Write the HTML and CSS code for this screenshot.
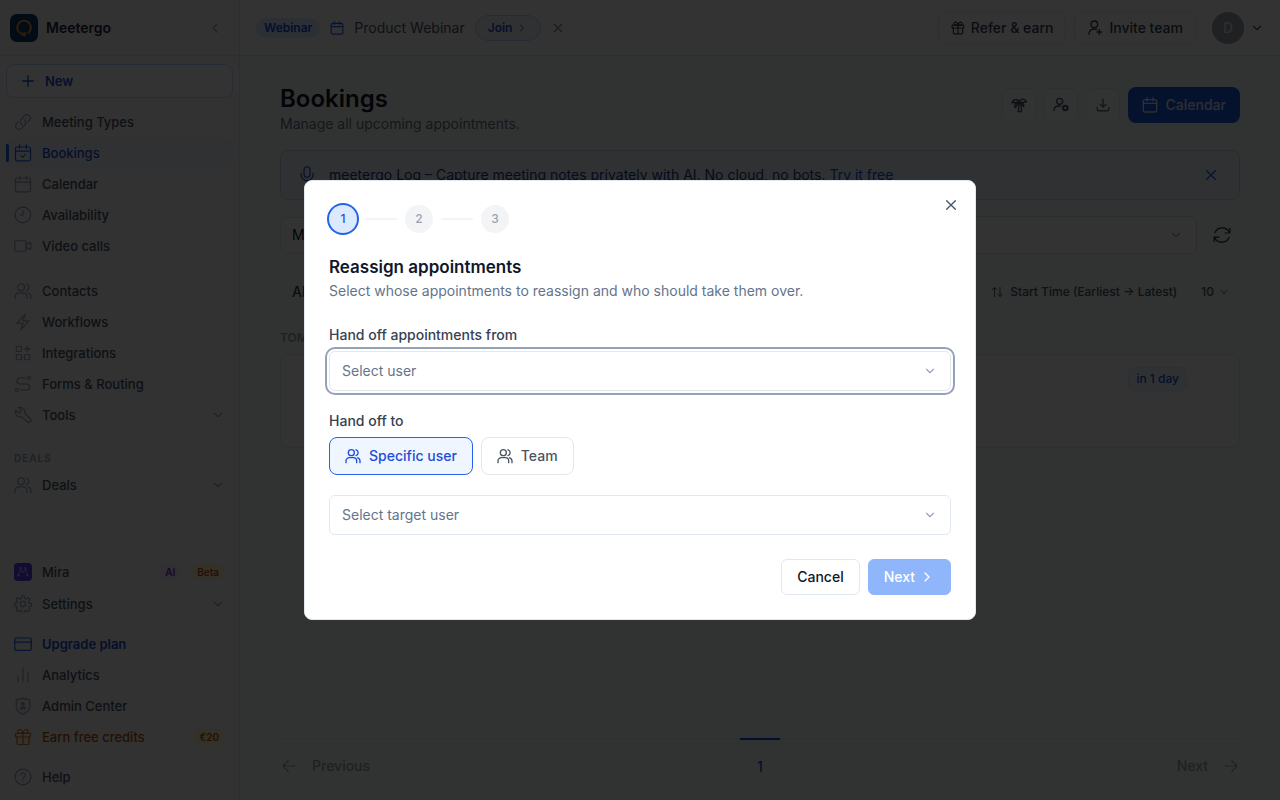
FILE: index.html
```html
<!DOCTYPE html>
<html lang="en">
<head>
<meta charset="utf-8">
<meta name="viewport" content="width=device-width, initial-scale=1">
<title>Bookings – Meetergo</title>
<link rel="stylesheet" href="styles.css">
</head>
<body>
<svg class="sprite" aria-hidden="true">
  <symbol id="chev-d" viewBox="0 0 24 24"><path d="m6 9 6 6 6-6"/></symbol>
  <symbol id="chev-l" viewBox="0 0 24 24"><path d="m15 18-6-6 6-6"/></symbol>
  <symbol id="chev-r" viewBox="0 0 24 24"><path d="m9 18 6-6-6-6"/></symbol>
  <symbol id="x" viewBox="0 0 24 24"><path d="M18.500 5.500 5.500 18.500M5.500 5.500l13 13"/></symbol>
  <symbol id="plus" viewBox="0 0 24 24"><path d="M12 4v16M4 12h16"/></symbol>
  <symbol id="link" viewBox="0 0 24 24"><path d="M13.2 8.7a4.5 4.5 0 0 1 1.2 7.2l-4.5 4.5a4.5 4.5 0 0 1-6.4-6.4l1.8-1.7m13.3-.6 1.8-1.7a4.5 4.5 0 0 0-6.4-6.4L9.600 8.100a4.500 4.500 0 0 0 1.200 7.200"/></symbol>
  <symbol id="cal" viewBox="0 0 24 24"><rect x="2" y="4" width="20" height="18.500" rx="2.500"/><path d="M2 9.500h20M7.500 1v5M16.500 1v5"/></symbol>
  <symbol id="cal-check" viewBox="0 0 24 24"><rect x="2" y="4" width="20" height="18.500" rx="2.500"/><path d="M2 9.500h20M7.500 1v5M16.500 1v5M9 15.500l2.300 2.300 4-4"/></symbol>
  <symbol id="clock" viewBox="0 0 24 24"><circle cx="12" cy="12" r="10.500"/><path d="M12 6v6H7.500"/></symbol>
  <symbol id="video" viewBox="0 0 24 24"><rect x="1" y="5" width="15" height="14" rx="2"/><path d="m16 10.500 5-3a1 1 0 0 1 1.500.800v7.400a1 1 0 0 1-1.500.800l-5-3"/></symbol>
  <symbol id="users" viewBox="0 0 24 24"><circle cx="9.500" cy="7" r="4.500"/><path d="M1.500 22v-2.500a5 5 0 0 1 5-5h6a5 5 0 0 1 5 5V22M16.500 2.700a4.500 4.500 0 0 1 0 8.600M22.500 22v-2.500a5 5 0 0 0-3.500-4.800"/></symbol>
  <symbol id="bolt" viewBox="0 0 24 24"><path d="m4 13.500 11-12-3 9h8L9 22.500l3-9z"/></symbol>
  <symbol id="grid-plus" viewBox="0 0 24 24"><rect x="3" y="3" width="7" height="7" rx="1.500"/><rect x="3" y="14" width="7" height="7" rx="1.500"/><rect x="14" y="14" width="7" height="7" rx="1.500"/><path d="M17.500 3v7M14 6.500h7"/></symbol>
  <symbol id="route" viewBox="0 0 24 24"><circle cx="4" cy="20" r="2"/><circle cx="20" cy="4" r="2"/><path d="M15 4H8a4 4 0 0 0 0 8h9a4 4 0 0 1 0 8H9"/></symbol>
  <symbol id="wrench" viewBox="0 0 24 24"><path d="M9.600 14.200a6.500 6.500 0 0 1-7.400-8.600l3.900 3.700 3-.7.700-3-3.700-3.400a6.500 6.500 0 0 1 8.400 7.600l7.300 7.200a2.800 2.800 0 0 1-4 4z"/></symbol>
  <symbol id="gear" viewBox="0 0 24 24"><circle cx="12" cy="12" r="3.500"/><path d="M10.300 1.500h3.400l.6 3 2 .8 2.600-1.700 2.400 2.400L19.600 8.600l.8 2 3 .600v3.400l-3 .6-.8 2 1.700 2.600-2.400 2.400-2.600-1.700-2 .8-.6 3h-3.400l-.6-3-2-.8-2.600 1.700-2.400-2.400L4.400 17.200l-.8-2-3-.6v-3.400l3-.6.8-2L2.700 6l2.400-2.400 2.600 1.700 2-.8z" stroke-linejoin="round"/></symbol>
  <symbol id="card" viewBox="0 0 24 24"><rect x="1" y="4" width="22" height="16.500" rx="2"/><path d="M1 9.500h22"/></symbol>
  <symbol id="bars" viewBox="0 0 24 24"><path d="M5.500 14v7M12 3v18M18.500 9v12"/></symbol>
  <symbol id="shield" viewBox="0 0 24 24"><path d="M12 1.500c2.500 1.500 5.500 2 9 2V13c0 5-4 8-9 10-5-2-9-5-9-10V3.500c3.500 0 6.500-.5 9-2z"/><g fill="currentColor"><circle cx="12" cy="9" r="1.800"/><path d="M8.500 16c0-4 7-4 7 0z"/></g></symbol>
  <symbol id="gift" viewBox="0 0 24 24"><rect x="2" y="7" width="20" height="5" rx="1"/><path d="M4 12v8a2 2 0 0 0 2 2h12a2 2 0 0 0 2-2v-8M12 7v15M12 7C11 3.500 9.500 2 7.500 2a2.500 2.500 0 0 0 0 5zM12 7c1-3.500 2.500-5 4.500-5a2.500 2.500 0 0 1 0 5z"/></symbol>
  <symbol id="help" viewBox="0 0 24 24"><circle cx="12" cy="12" r="10.500"/><path d="M9 9.500a3 3 0 1 1 4.500 2.600c-1 .6-1.500 1-1.500 2M12 17v.500"/></symbol>
  <symbol id="user-plus" viewBox="0 0 24 24"><circle cx="11" cy="6.500" r="5"/><path d="M3 21.500c0-5 3-8 8-8 1.500 0 2.500.300 3.500.700M18.500 14.500v7M15 18h7"/></symbol>
  <symbol id="user-cog" viewBox="0 0 24 24"><circle cx="10" cy="6.500" r="4.500"/><path d="M1.500 20.500c0-4.500 3-7 7.500-7h2"/><circle cx="18.500" cy="16.500" r="3.300" stroke-width="3"/></symbol>
  <symbol id="palm" viewBox="0 0 24 24"><path d="M12 8C10 1.500 2.500 3 1.500 9l3-1.500L6 9.500 8.500 7.500zM12 8c1-6 9-6.500 11-.5l-3-.5-1.500 2-3-1.500zM12 8c-5 0-7.500 3-6 8l2.500-2.500.5-2.500zM12 8c5-.5 8 2.500 7 6.500L16.500 12l-1-2zM11.500 10c.5 4 .5 8-1 12h5c.5-4.500 0-8.500-2-12z"/></symbol>
  <symbol id="download" viewBox="0 0 24 24"><path d="M12 2v13M7 10.500l5 5 5-5M2 16v3.500A2.500 2.500 0 0 0 4.500 22h15a2.500 2.500 0 0 0 2.500-2.500V16"/></symbol>
  <symbol id="mic" viewBox="0 0 24 24"><rect x="8" y="1" width="8" height="14" rx="4"/><path d="M4 9.500v2a8 8 0 0 0 16 0v-2M12 19.500V23"/></symbol>
  <symbol id="refresh" viewBox="0 0 24 24"><path d="M16 9.300h6.500V3M22 9A10.500 10.500 0 0 0 2.500 9M8 14.700H1.500V21M2 15a10.500 10.500 0 0 0 19.500 0"/></symbol>
  <symbol id="sort" viewBox="0 0 24 24"><path d="M7 21V3M2.500 7.500 7 3l4.500 4.500M18 3v18M13.500 16.500 18 21l4.500-4.500"/></symbol>
  <symbol id="arrow-l" viewBox="0 0 24 24"><path d="M20 12H4M11 5l-7 7 7 7"/></symbol>
  <symbol id="arrow-r" viewBox="0 0 24 24"><path d="M4 12h16M13 5l7 7-7 7"/></symbol>
</svg>

<div class="app">
  <aside class="sidebar">
    <div class="brand">
      <svg class="logo" viewBox="0 0 28 28" aria-hidden="true"><rect width="28" height="28" rx="7" fill="#123a73"/><path d="M9 18.200A6.800 6.800 0 1 1 18.500 18.800" fill="none" stroke="#e8912b" stroke-width="2"/><path d="M8.500 17c2.500 1.800 5 2 8 1.200l-1.300 4.300c-3-.3-5.500-2.500-6.700-5.500z" fill="#e8912b"/></svg>
      <span class="brand-name">Meetergo</span>
      <button class="plain faint" aria-label="Collapse sidebar"><svg class="i16"><use href="#chev-l"/></svg></button>
    </div>
    <div class="side-top">
      <button class="new"><svg class="i16"><use href="#plus"/></svg>New</button>
      <nav class="nav">
        <a href="#" class="item"><svg class="i18"><use href="#link"/></svg>Meeting Types</a>
        <a href="#" class="item active"><svg class="i18"><use href="#cal-check"/></svg>Bookings</a>
        <a href="#" class="item"><svg class="i18"><use href="#cal"/></svg>Calendar</a>
        <a href="#" class="item"><svg class="i18"><use href="#clock"/></svg>Availability</a>
        <a href="#" class="item"><svg class="i18"><use href="#video"/></svg>Video calls</a>
      </nav>
      <hr class="rule wide">
      <nav class="nav">
        <a href="#" class="item"><svg class="i18"><use href="#users"/></svg>Contacts</a>
        <a href="#" class="item"><svg class="i18"><use href="#bolt"/></svg>Workflows</a>
        <a href="#" class="item"><svg class="i18"><use href="#grid-plus"/></svg>Integrations</a>
        <a href="#" class="item"><svg class="i18"><use href="#route"/></svg>Forms &amp; Routing</a>
        <a href="#" class="item"><svg class="i18"><use href="#wrench"/></svg>Tools<svg class="i14 end"><use href="#chev-d"/></svg></a>
      </nav>
      <h2 class="group">DEALS</h2>
      <nav class="nav">
        <a href="#" class="item"><svg class="i18"><use href="#users"/></svg>Deals<svg class="i14 end"><use href="#chev-d"/></svg></a>
      </nav>
    </div>
    <div class="side-bottom">
      <nav class="nav loose">
        <a href="#" class="item"><svg class="mira" viewBox="0 0 18 18"><rect width="18" height="18" rx="4" fill="#5b3df0"/><path d="M4.500 12.500 6.500 5.500 9 10l2.500-4.500 2 7" fill="none" stroke="#b9adf5" stroke-width="1"/><g fill="#ddd6fe"><circle cx="4.500" cy="12.500" r="1"/><circle cx="6.500" cy="5" r="1"/><circle cx="11.500" cy="5" r="1"/><circle cx="13.500" cy="12.500" r="1"/></g></svg>Mira<span class="end tag violet">AI</span><span class="tag amber">Beta</span></a>
        <a href="#" class="item"><svg class="i18"><use href="#gear"/></svg>Settings<svg class="i14 end"><use href="#chev-d"/></svg></a>
      </nav>
      <hr class="rule">
      <nav class="nav">
        <a href="#" class="item upgrade"><svg class="i18"><use href="#card"/></svg>Upgrade plan</a>
        <a href="#" class="item"><svg class="i18"><use href="#bars"/></svg>Analytics</a>
        <a href="#" class="item"><svg class="i18"><use href="#shield"/></svg>Admin Center</a>
        <a href="#" class="item earn"><svg class="i18"><use href="#gift"/></svg>Earn free credits<span class="end tag amber">€20</span></a>
      </nav>
      <hr class="rule">
      <nav class="nav">
        <a href="#" class="item"><svg class="i18"><use href="#help"/></svg>Help</a>
      </nav>
    </div>
  </aside>

  <div class="page">
    <header class="topbar">
      <span class="pill">Webinar</span>
      <svg class="i14 blue"><use href="#cal"/></svg>
      <span class="event">Product Webinar</span>
      <button class="join">Join<svg class="i12"><use href="#chev-r"/></svg></button>
      <button class="plain muted" aria-label="Dismiss"><svg class="i14"><use href="#x"/></svg></button>
      <div class="account">
        <button class="outline"><svg class="i14"><use href="#gift"/></svg>Refer &amp; earn</button>
        <button class="outline"><svg class="i16"><use href="#user-plus"/></svg>Invite team</button>
        <button class="plain user" aria-label="Account"><span class="avatar">D</span><svg class="i14"><use href="#chev-d"/></svg></button>
      </div>
    </header>

    <main class="content">
      <div class="head">
        <div>
          <h1 class="title">Bookings</h1>
          <p class="lead">Manage all upcoming appointments.</p>
        </div>
        <div class="actions">
          <button class="square" aria-label="Out of office"><svg class="i16"><use href="#palm"/></svg></button>
          <button class="square" aria-label="Reassign"><svg class="i16"><use href="#user-cog"/></svg></button>
          <button class="square" aria-label="Export"><svg class="i14"><use href="#download"/></svg></button>
          <button class="primary"><svg class="i16"><use href="#cal"/></svg>Calendar</button>
        </div>
      </div>

      <div class="banner">
        <svg class="i18"><use href="#mic"/></svg>
        <p class="banner-text">meetergo Log – Capture meeting notes privately with AI. No cloud, no bots. <a class="try" href="#">Try it free</a></p>
        <button class="plain blue" aria-label="Close"><svg class="i16"><use href="#x"/></svg></button>
      </div>

      <div class="filters">
        <button class="scope">My bookings</button>
        <div class="field grow">
          <select class="filter" aria-label="Filter"><option></option></select>
          <svg class="i14"><use href="#chev-d"/></svg>
        </div>
        <button class="plain refresh" aria-label="Refresh"><svg class="i18"><use href="#refresh"/></svg></button>
      </div>

      <div class="toolbar">
        <button class="plain tab">All</button>
        <button class="plain sort"><svg class="i12"><use href="#sort"/></svg>Start Time (Earliest → Latest)</button>
        <button class="plain count">10<svg class="i12"><use href="#chev-d"/></svg></button>
      </div>

      <h2 class="day">TOMORROW</h2>
      <article class="card"><span class="when">in 1 day</span></article>

      <nav class="pager" aria-label="Pagination">
        <button class="plain"><svg class="i18"><use href="#arrow-l"/></svg>Previous</button>
        <a href="#" class="current">1</a>
        <button class="plain next">Next<svg class="i18"><use href="#arrow-r"/></svg></button>
      </nav>
    </main>
  </div>
</div>

<div class="overlay">
  <div class="modal" role="dialog" aria-modal="true" aria-labelledby="dlg-title">
    <button class="plain close" aria-label="Close"><svg class="i16"><use href="#x"/></svg></button>
    <ol class="steps">
      <li class="step on">1</li>
      <li class="bar" aria-hidden="true"></li>
      <li class="step">2</li>
      <li class="bar" aria-hidden="true"></li>
      <li class="step">3</li>
    </ol>
    <h2 class="dlg-title" id="dlg-title">Reassign appointments</h2>
    <p class="dlg-lead">Select whose appointments to reassign and who should take them over.</p>

    <label class="label" for="from">Hand off appointments from</label>
    <div class="field">
      <select class="select focus" id="from"><option>Select user</option></select>
      <svg class="i14"><use href="#chev-d"/></svg>
    </div>

    <label class="label second" for="to">Hand off to</label>
    <div class="choices">
      <button class="choice on"><svg class="i16"><use href="#users"/></svg>Specific user</button>
      <button class="choice"><svg class="i16"><use href="#users"/></svg>Team</button>
    </div>
    <div class="field">
      <select class="select" id="to"><option>Select target user</option></select>
      <svg class="i14"><use href="#chev-d"/></svg>
    </div>

    <div class="dlg-foot">
      <button class="cancel">Cancel</button>
      <button class="go">Next<svg class="i16"><use href="#chev-r"/></svg></button>
    </div>
  </div>
</div>
</body>
</html>
```

FILE: styles.css
```css
* { box-sizing: border-box; }
body { margin: 0; font: 14px/20px Inter, "Liberation Sans", sans-serif; color: #0f172a; }
h1, h2, p, ol { margin: 0; padding: 0; }
a { color: inherit; text-decoration: none; }
button, select { font: inherit; color: inherit; }
button { cursor: pointer; }
svg { flex: none; fill: none; stroke: currentColor; stroke-width: 2; stroke-linecap: round; stroke-linejoin: round; }
.sprite { display: none; }
.i12 { width: 12px; height: 12px; }
.i14 { width: 14px; height: 14px; }
.i16 { width: 16px; height: 16px; }
.i18 { width: 18px; height: 18px; stroke-width: 1.6; }
.logo, .mira { stroke: none; }
.plain { display: flex; align-items: center; padding: 0; border: 0; background: none; }
.faint { color: #94a3b8; }
.muted { color: #64748b; }
.blue { color: #2563eb; }

.app { display: flex; min-height: 100vh; }

/* Sidebar */
.sidebar { display: flex; flex-direction: column; flex: 0 0 240px; background: #f8f8f8; border-right: 1px solid #e2e4e8; }
.brand { display: flex; align-items: center; gap: 8px; height: 56px; padding: 0 16px 0 10px; border-bottom: 1px solid #e2e4e8; }
.brand .plain { margin-left: auto; }
.logo { width: 28px; height: 28px; }
.brand-name { font-weight: 600; color: #1e293b; }
.side-top { padding: 8px 6px; }
.new { display: flex; align-items: center; gap: 9px; width: 100%; height: 34px; margin-bottom: 9px; padding: 0 13px; border: 1px solid #bfdbfe; border-radius: 8px; background: #fff; color: #1d4ed8; font-size: 13px; font-weight: 600; }
.nav { display: flex; flex-direction: column; gap: 1px; }
.nav.loose { gap: 2px; }
.item { position: relative; display: flex; align-items: center; gap: 10px; height: 30px; padding: 0 8px; border-radius: 8px; font-size: 13px; font-weight: 500; color: #475569; }
.item > svg { color: #94a3b8; }
.item .mira { width: 18px; height: 18px; }
.item .end { margin-left: auto; }
.item.active { background: #eff6ff; color: #1d4ed8; }
.item.active::before { content: ""; position: absolute; left: 0; top: 6px; bottom: 6px; width: 3px; border-radius: 0 2px 2px 0; background: #2563eb; }
.item.active > svg { color: #2563eb; }
.rule { margin: 4px 0 5px; border: 0; border-top: 1px solid #f0f0f2; }
.rule.wide { margin: 7px 0; }
.group { margin: 20px 8px 4px; font-size: 10px; line-height: 16px; font-weight: 600; letter-spacing: 1px; color: #94a3b8; }
.side-bottom { margin-top: auto; padding: 8px 6px; border-top: 1px solid #f0f0f2; }
.tag { padding: 0 6px; border-radius: 8px; font-size: 10px; line-height: 16px; font-weight: 600; }
.violet { background: #f3e8ff; color: #7e22ce; }
.amber { background: #fef3c7; color: #b45309; }
.item.upgrade { color: #1d4ed8; font-weight: 600; }
.item.upgrade > svg { color: #2563eb; }
.item.earn { color: #b45309; }
.item.earn > svg { color: #d97706; }

/* Top bar */
.page { display: flex; flex-direction: column; flex: 1; min-width: 0; background: #f6fcf9; }
.topbar { display: flex; align-items: center; gap: 10px; height: 56px; padding: 0 16px; background: #fff; border-bottom: 1px solid #e2e4e8; }
.pill { padding: 0 8px; border-radius: 10px; background: #dbeafe; color: #1d4ed8; font-size: 12px; font-weight: 600; }
.event { color: #475569; }
.join { display: flex; align-items: center; gap: 4px; height: 26px; padding: 0 12px; border: 1px solid #bfdbfe; border-radius: 13px; background: #eff6ff; color: #1d4ed8; font-size: 12px; font-weight: 600; }
.account { display: flex; align-items: center; gap: 8px; margin-left: auto; }
.outline { display: flex; align-items: center; gap: 6px; height: 34px; padding: 0 12px; border: 1px solid #e8eaed; border-radius: 8px; background: #fff; font-weight: 500; color: #334155; }
.user { gap: 6px; margin-left: 8px; color: #475569; }
.avatar { width: 32px; height: 32px; border-radius: 50%; background: #9ca3af; color: #e5e7eb; font-weight: 500; line-height: 32px; }

/* Bookings */
.content { display: flex; flex-direction: column; flex: 1; padding: 28px 40px 8px; }
.head { display: flex; justify-content: space-between; align-items: flex-start; }
.title { font-size: 24px; line-height: 30px; font-weight: 600; color: #0f172a; }
.lead { color: #64748b; }
.actions { display: flex; align-items: center; gap: 8px; margin-top: 3px; }
.square { display: grid; place-items: center; width: 34px; height: 34px; padding: 0; border: 1px solid #e8eaed; border-radius: 8px; background: #fbfdfc; color: #475569; }
.primary { display: flex; align-items: center; gap: 8px; height: 36px; padding: 0 14px; border: 0; border-radius: 8px; background: #1d5be6; color: #dbe4f5; font-weight: 500; }
.banner { display: flex; align-items: center; gap: 13px; height: 50px; margin-top: 16px; padding: 0 20px 0 17px; border: 1px solid #c7dbfb; border-radius: 8px; background: #eff4fc; color: #1e3a8a; }
.banner > svg { color: #1d4ed8; }
.banner-text { flex: 1; }
.try { color: #1d4ed8; text-decoration: underline; }
.filters { display: flex; align-items: center; gap: 16px; margin-top: 16px; }
.scope { height: 36px; padding: 0 11px; border: 1px solid #e2e5e9; border-radius: 6px; background: #fff; }
.field { display: grid; align-items: center; }
.field > * { grid-area: 1 / 1; }
.field > svg { justify-self: end; margin-right: 14px; color: #94a3b8; pointer-events: none; }
.grow { flex: 1; }
.filter { appearance: none; width: 100%; height: 38px; border: 1px solid #d6dade; border-radius: 6px; background: #fff; }
.refresh { margin-right: 9px; color: #1e293b; }
.toolbar { display: flex; align-items: center; gap: 24px; height: 36px; margin-top: 20px; padding: 0 10px 0 12px; font-size: 12px; font-weight: 500; color: #475569; }
.tab { margin-right: auto; font-size: 14px; color: #334155; }
.sort { gap: 7px; }
.count { gap: 4px; }
.day { margin-top: 18px; font-size: 12px; line-height: 20px; font-weight: 600; color: #94a3b8; }
.card { display: flex; justify-content: flex-end; align-items: flex-start; height: 94px; margin-top: 6px; padding: 12px 52px; border: 1px solid #e8eaed; border-radius: 8px; background: #fff; }
.when { padding: 1px 7px; border: 1px solid #dbeafe; border-radius: 6px; background: #eff6ff; color: #1d4ed8; font-size: 12px; font-weight: 500; }
.pager { display: grid; grid-template-columns: 1fr 40px 1fr; margin-top: auto; border-top: 1px solid #e8ecea; color: #94a3b8; font-weight: 500; }
.pager .plain { gap: 14px; }
.next { justify-self: end; }
.current { height: 54px; margin-top: -1px; border-top: 2px solid #1d4ed8; line-height: 54px; text-align: center; color: #1d4ed8; }

/* Dialog */
.overlay { position: fixed; inset: 0; display: grid; place-items: center; background: rgba(0, 0, 0, .8); }
.modal { position: relative; width: min(672px, calc(100vw - 32px)); padding: 24px; border: 1px solid #e2e8f0; border-radius: 8px; background: #fff; }
.close { position: absolute; top: 16px; right: 16px; color: #475569; }
.steps { display: flex; align-items: center; gap: 8px; list-style: none; }
.step { width: 28px; height: 28px; border-radius: 50%; background: #f3f4f6; color: #9ca3af; font-size: 12px; font-weight: 500; line-height: 28px; text-align: center; }
.step.on { background: #dbeafe; color: #1d4ed8; box-shadow: 0 0 0 2px #2563eb; }
.bar { width: 32px; height: 2px; background: #f3f4f6; }
.dlg-title { margin-top: 24px; font-size: 17px; line-height: 20px; font-weight: 600; }
.dlg-lead { margin-top: 4px; color: #64748b; }
.label { display: block; margin: 24px 0 6px; font-weight: 500; color: #374151; }
.second { margin-top: 20px; }
.select { appearance: none; width: 100%; height: 40px; padding: 0 12px; border: 1px solid #e2e8f0; border-radius: 6px; background: #fff; color: #64748b; }
.select.focus { outline: 2px solid #94a3b8; outline-offset: 2px; }
.choices { display: flex; gap: 8px; margin-bottom: 20px; }
.choice { display: flex; align-items: center; gap: 8px; height: 38px; padding: 0 15px; border: 1px solid #e5e7eb; border-radius: 8px; background: #fff; color: #4b5563; font-weight: 500; }
.choice.on { border-color: #2563eb; background: #eff6ff; color: #1d4ed8; }
.dlg-foot { display: flex; justify-content: flex-end; gap: 8px; margin-top: 24px; }
.cancel, .go { display: flex; align-items: center; height: 36px; padding: 0 15px; border: 1px solid #e2e8f0; border-radius: 6px; background: #fff; font-weight: 500; }
.go { gap: 4px; border-color: #8fb6fb; background: #8fb6fb; color: #fff; }
```
